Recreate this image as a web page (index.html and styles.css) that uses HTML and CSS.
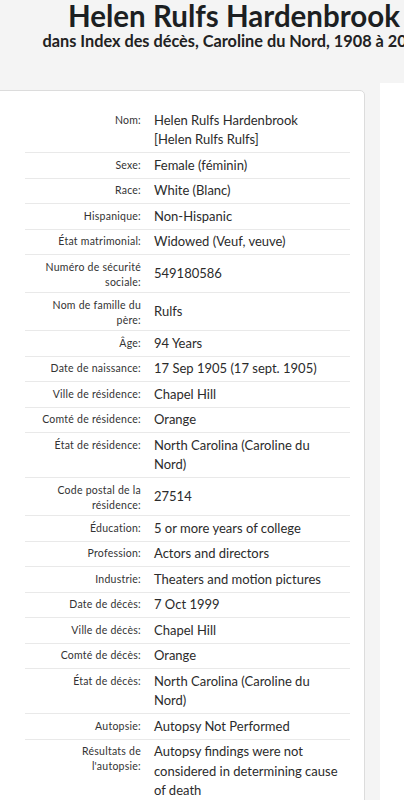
FILE: index.html
```html
<!DOCTYPE html>
<html lang="fr">
<head>
<meta charset="utf-8">
<title>Helen Rulfs Hardenbrook</title>
<link rel="stylesheet" href="styles.css">
</head>
<body>
<div class="page">
  <header class="head">
    <h1 class="title">Helen Rulfs Hardenbrook</h1>
    <p class="subtitle">dans Index des décès, Caroline du Nord, 1908 à 2007</p>
  </header>
  <div class="layout">
    <section class="card">
      <dl class="facts">
        <div class="row"><dt>Nom:</dt><dd>Helen Rulfs Hardenbrook<br>[Helen Rulfs Rulfs]</dd></div>
        <div class="row"><dt>Sexe:</dt><dd>Female (féminin)</dd></div>
        <div class="row"><dt>Race:</dt><dd>White (Blanc)</dd></div>
        <div class="row"><dt>Hispanique:</dt><dd>Non-Hispanic</dd></div>
        <div class="row"><dt>État matrimonial:</dt><dd>Widowed (Veuf, veuve)</dd></div>
        <div class="row"><dt>Numéro de sécurité sociale:</dt><dd>549180586</dd></div>
        <div class="row"><dt>Nom de famille du père:</dt><dd>Rulfs</dd></div>
        <div class="row"><dt>Âge:</dt><dd>94 Years</dd></div>
        <div class="row"><dt>Date de naissance:</dt><dd>17 Sep 1905 (17 sept. 1905)</dd></div>
        <div class="row"><dt>Ville de résidence:</dt><dd>Chapel Hill</dd></div>
        <div class="row"><dt>Comté de résidence:</dt><dd>Orange</dd></div>
        <div class="row"><dt>État de résidence:</dt><dd>North Carolina (Caroline du Nord)</dd></div>
        <div class="row"><dt>Code postal de la résidence:</dt><dd>27514</dd></div>
        <div class="row"><dt>Éducation:</dt><dd>5 or more years of college</dd></div>
        <div class="row"><dt>Profession:</dt><dd>Actors and directors</dd></div>
        <div class="row"><dt>Industrie:</dt><dd>Theaters and motion pictures</dd></div>
        <div class="row"><dt>Date de décès:</dt><dd>7 Oct 1999</dd></div>
        <div class="row"><dt>Ville de décès:</dt><dd>Chapel Hill</dd></div>
        <div class="row"><dt>Comté de décès:</dt><dd>Orange</dd></div>
        <div class="row"><dt>État de décès:</dt><dd>North Carolina (Caroline du Nord)</dd></div>
        <div class="row"><dt>Autopsie:</dt><dd>Autopsy Not Performed</dd></div>
        <div class="row"><dt>Résultats de l'autopsie:</dt><dd>Autopsy findings were not considered in determining cause of death</dd></div>
      </dl>
    </section>
    <aside class="side"></aside>
  </div>
</div>
</body>
</html>
```

FILE: styles.css
```css
html, body {
  margin: 0;
  padding: 0;
}
body {
  background: #f4f4f4;
  overflow: hidden;
  font-family: Lato, "Noto Sans", sans-serif;
  color: #333;
}
.page {
  width: 468px;
}
.head {
  text-align: center;
  white-space: nowrap;
}
.title {
  margin: 0;
  font-size: 29.5px;
  line-height: 32px;
  font-weight: 700;
  color: #1c1f22;
}
.subtitle {
  margin: 0;
  font-size: 16.3px;
  line-height: 18px;
  font-weight: 700;
  color: #222;
}
.layout {
  display: flex;
  align-items: flex-start;
  margin-top: 33px;
  margin-left: -20px;
}
.card {
  flex: none;
  width: 385px;
  box-sizing: border-box;
  margin-top: 7px;
  padding: 17px 14px 20px 44px;
  background: #fff;
  border: 1px solid #dcdcdc;
  border-radius: 5px;
}
.side {
  flex: none;
  width: 60px;
  height: 760px;
  margin-left: 15px;
  background: #fff;
}
.facts {
  margin: 0;
}
.row {
  display: flex;
  padding: 2.5px 0;
  border-bottom: 1px solid #e9e9e9;
}
.row dt {
  flex: none;
  width: 105px;
  padding-left: 11px;
  padding-top: 2px;
  align-self: flex-start;
  text-align: right;
  font-size: 10.5px;
  line-height: 15px;
  letter-spacing: 0.25px;
  color: #333;
}
.row dd {
  flex: 1;
  margin: 0;
  padding: 0 7px 0 13px;
  align-self: center;
  font-size: 13px;
  line-height: 19.5px;
  color: #2b2b2b;
}
```
